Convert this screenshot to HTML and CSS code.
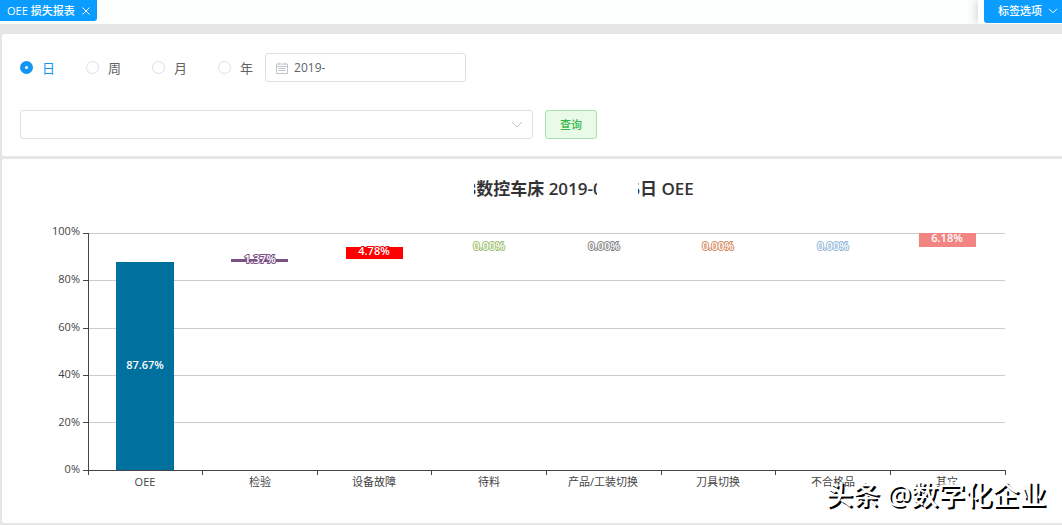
FILE: index.html
```html
<!DOCTYPE html>
<html lang="zh-CN">
<head>
<meta charset="utf-8">
<meta name="viewport" content="width=device-width, initial-scale=1">
<title>OEE 损失报表</title>
<link rel="stylesheet" href="styles.css">
</head>
<body>
<header class="tabs">
  <button class="tab" type="button">OEE 损失报表
    <svg class="tab-close" viewBox="0 0 8 8"><path d="M.5.5l7 7M7.5.5l-7 7"/></svg>
  </button>
  <div class="tab-tools">
    <button class="tab-options" type="button">标签选项
      <svg class="tab-arrow" viewBox="0 0 10 6"><path d="M1 .8l4 4 4-4"/></svg>
    </button>
  </div>
</header>
<main class="page">
  <form class="panel filters">
    <div class="row">
      <div class="radios">
        <label class="radio"><input type="radio" name="period" checked><span>日</span></label>
        <label class="radio"><input type="radio" name="period"><span>周</span></label>
        <label class="radio"><input type="radio" name="period"><span>月</span></label>
        <label class="radio"><input type="radio" name="period"><span>年</span></label>
      </div>
      <label class="date">
        <svg class="calendar" viewBox="0 0 12 12"><path d="M.5 2h11v9.500H.5zM.5 4.500h11M3 .5V3M9 .5V3M2.500 6.500h7M2.500 8.500h7"/></svg>
        <input type="text" value="2019-" aria-label="日期">
      </label>
    </div>
    <div class="row">
      <div class="picker">
        <select aria-label="设备"><option></option></select>
        <svg class="picker-arrow" viewBox="0 0 12 7"><path d="M1 1l5 5 5-5"/></svg>
      </div>
      <button class="query" type="button">查询</button>
    </div>
  </form>
  <section class="panel report">
    <h1 class="title"><span class="slice slice-start">8</span><span>数控车床 2019-</span><span class="slice slice-zero">0</span><span class="blank"></span><span class="slice slice-start">6</span><span>日 OEE</span></h1>
    <svg class="chart" viewBox="2 207 1060 290" role="img" aria-label="OEE">
      <path class="grid" d="M88 233.500h917M88 280.500h917M88 328.500h917M88 375.500h917M88 422.500h917"/>
      <g class="ticks">
        <text x="80" y="235">100%</text>
        <text x="80" y="283">80%</text>
        <text x="80" y="331">60%</text>
        <text x="80" y="378">40%</text>
        <text x="80" y="426">20%</text>
        <text x="80" y="473">0%</text>
      </g>
      <g class="bars">
        <rect x="116" y="262" width="58" height="208" fill="#00719f"/>
        <rect x="231" y="259" width="57" height="3" fill="#7a5286"/>
        <rect x="346" y="247" width="57" height="12" fill="#ff0000"/>
        <rect x="919" y="233" width="57" height="14" fill="#f28582"/>
      </g>
      <path class="axis" d="M88.500 233v242M83 470.500h923M83 233.500h5M83 280.500h5M83 328.500h5M83 375.500h5M83 422.500h5M202.500 470v5M317.500 470v5M431.500 470v5M546.500 470v5M661.500 470v5M775.500 470v5M890.500 470v5M1005.500 470v5"/>
      <g class="values">
        <text x="145" y="369" stroke="#00719f">87.67%</text>
        <text x="260" y="263" stroke="#7a5286">1.37%</text>
        <text x="374" y="255" stroke="#ff0000">4.78%</text>
        <text x="489" y="250" stroke="#9abf6c">0.00%</text>
        <text x="604" y="250" stroke="#858585">0.00%</text>
        <text x="718" y="250" stroke="#d58a62">0.00%</text>
        <text x="833" y="250" stroke="#94b6da">0.00%</text>
        <text x="947" y="242" stroke="#f28582">6.18%</text>
      </g>
      <g class="names">
        <text x="145" y="486">OEE</text>
        <text x="260" y="486">检验</text>
        <text x="374" y="486">设备故障</text>
        <text x="489" y="486">待料</text>
        <text x="603" y="486">产品/工装切换</text>
        <text x="718" y="486">刀具切换</text>
        <text x="833" y="486">不合格品</text>
        <text x="947" y="486">其它</text>
      </g>
    </svg>
    <div class="watermark">头条 @数字化企业</div>
  </section>
</main>
</body>
</html>
```
FILE: styles.css
```css
* { box-sizing: border-box; }

body {
  margin: 0;
  background: #e6e6e6;
  color: #606266;
  font: 11px/16px "Open Sans", "Noto Sans CJK SC", sans-serif;
}

button, input, select { font: inherit; color: inherit; }

svg { display: block; fill: none; stroke: currentColor; }

.tabs {
  display: flex;
  justify-content: space-between;
  height: 24px;
  background: #fdfffe;
}

.tab, .tab-options {
  display: flex;
  align-items: center;
  border: 0;
  background: #0a9dff;
  color: #fff;
  font-weight: 500;
  white-space: nowrap;
}

.tab {
  gap: 7px;
  height: 21px;
  padding: 0 7px;
  border-radius: 0 0 3px 0;
}

.tab-close { width: 8px; height: 8px; }

.tab-tools {
  padding-left: 6px;
  background: #fff;
  box-shadow: -3px 0 8px #0002;
  clip-path: inset(0 0 0 -12px);
}

.tab-options {
  gap: 6px;
  height: 23px;
  padding: 0 4px 2px 14px;
  border-radius: 0 0 0 3px;
}

.tab-arrow { width: 10px; height: 6px; }

.page {
  display: grid;
  gap: 3px;
  padding: 10px 0 2px 2px;
}

.panel { background: #fff; border-radius: 2px 0 0 2px; }

.filters {
  display: grid;
  gap: 28px;
  padding: 19px 18px 17px;
  font-size: 13px;
}

.row { display: flex; align-items: center; gap: 12px; }

.radios { display: flex; gap: 31px; }

.radio { display: flex; align-items: center; gap: 9px; }

.radio input {
  appearance: none;
  width: 13px;
  height: 13px;
  margin: 0;
  border: 1px solid #dcdfe6;
  border-radius: 50%;
  background: #fff;
}

.radio input:checked { border: 5px solid #1296f3; }

.radio input:checked + span { color: #1296f3; }

.date {
  display: flex;
  align-items: center;
  gap: 6px;
  width: 201px;
  height: 29px;
  padding: 0 10px;
  border: 1px solid #dcdfe6;
  border-radius: 3px;
  font-size: 12px;
}

.date input {
  flex: 1;
  min-width: 0;
  padding: 0;
  border: 0;
  outline: 0;
  background: none;
}

.calendar { flex: none; width: 12px; height: 12px; color: #c0c4cc; }

.picker { display: grid; align-items: center; flex: 0 1 513px; }

.picker select, .picker-arrow { grid-area: 1 / 1; }

.picker select {
  appearance: none;
  width: 100%;
  height: 29px;
  border: 1px solid #dcdfe6;
  border-radius: 3px;
  background: #fff;
}

.picker-arrow {
  justify-self: end;
  width: 12px;
  height: 7px;
  margin-right: 10px;
  color: #c0c4cc;
  pointer-events: none;
}

.query {
  width: 52px;
  height: 29px;
  padding: 0;
  border: 1px solid #a9e2ae;
  border-radius: 3px;
  background: #e9fae9;
  color: #35ba4a;
  font-size: 11px;
  font-weight: 500;
}

.report { position: relative; padding: 18px 0 26px; }

.title {
  display: flex;
  justify-content: center;
  height: 24px;
  margin: 0 0 6px;
  padding-left: 104px;
  color: #333;
  font-size: 17px;
  font-weight: 600;
  line-height: 24px;
  white-space: pre;
}

.slice { display: flex; overflow: hidden; }

.slice-start { justify-content: flex-end; width: 2px; }

.slice-zero { width: 4px; }

.blank { width: 41px; }

.chart { width: 100%; height: auto; }

.ticks, .names { stroke: none; fill: #444; }

.ticks { text-anchor: end; }

.names, .values { text-anchor: middle; }

.bars { stroke: none; }

.values {
  fill: #fff;
  font-weight: 600;
  stroke-width: 2px;
  paint-order: stroke;
}

.grid { stroke: #ccc; }

.axis { stroke: #444; }

.watermark {
  position: absolute;
  right: 16px;
  bottom: 8px;
  color: #fff;
  font-size: 27px;
  line-height: 40px;
  font-weight: 500;
  text-shadow: 2px 2px 0 #000;
  white-space: nowrap;
}
```
